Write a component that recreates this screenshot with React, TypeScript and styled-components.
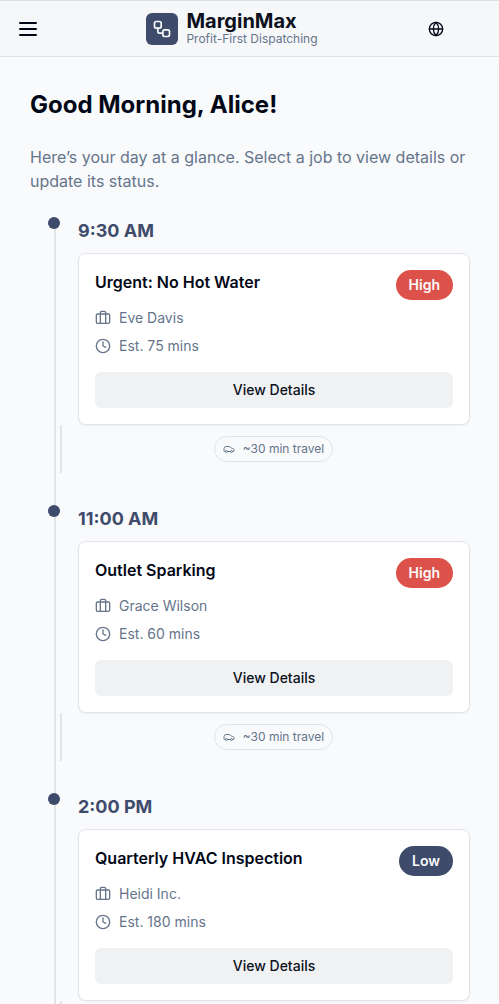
import React from "react";
import styled, { createGlobalStyle } from "styled-components";
import { Briefcase, Car, Clock, Globe, Workflow } from "lucide-react";

const navy = "#3f4b6b";
const ink = "#020817";
const muted = "#65758b";
const line = "#e2e4ea";
const canvas = "#f9fafc";

const GlobalStyle = createGlobalStyle`
  *, *::before, *::after { box-sizing: border-box; }
  html, body { margin: 0; height: 100%; overflow: hidden; }
  body {
    background: ${canvas};
    color: ${ink};
    font-family: Inter, "Liberation Sans", sans-serif;
    font-size: 16px;
    line-height: 24px;
  }
  #root { height: 100%; }
  h1, h2, h3, p { margin: 0; }
  button { font: inherit; color: inherit; border: 0; padding: 0; background: none; }
`;

const Page = styled.div`
  height: 100%;
  overflow: hidden;
`;

const Header = styled.header`
  display: flex;
  align-items: center;
  justify-content: space-between;
  height: 57px;
  padding: 0 51px 0 16px;
  background: #f6f7f9;
  border-top: 1px solid #dddfe3;
  border-bottom: 1px solid #dfe1e5;
`;

const IconButton = styled.button`
  display: grid;
  place-items: center;
  width: 24px;
  height: 24px;
`;

const Brand = styled.div`
  display: flex;
  align-items: center;
  gap: 8px;
`;

const Logo = styled.div`
  display: grid;
  place-items: center;
  width: 32px;
  height: 32px;
  border-radius: 6px;
  background: ${navy};
  color: #f9fafc;
`;

const BrandName = styled.div`
  font-size: 20px;
  font-weight: 700;
  line-height: 20px;
  color: #0c111d;
`;

const Tagline = styled.div`
  font-size: 12px;
  line-height: 16px;
  color: ${muted};
`;

const Main = styled.main`
  padding: 32px 29px 0 30px;
`;

const Greeting = styled.h1`
  font-size: 24px;
  font-weight: 700;
  line-height: 32px;
`;

const Intro = styled.p`
  margin-top: 24px;
  color: ${muted};
`;

const Timeline = styled.div`
  margin: 24px 0 0 24px;
  padding-left: 22px;
  border-left: 2px solid ${line};
`;

const Stop = styled.section`
  position: relative;
  margin-bottom: 32px;
`;

const Dot = styled.span`
  position: absolute;
  top: 0;
  left: -30px;
  width: 12px;
  height: 12px;
  border-radius: 50%;
  background: ${navy};
`;

const Time = styled.h2`
  margin-bottom: 8px;
  font-size: 18px;
  font-weight: 700;
  line-height: 28px;
  color: ${navy};
`;

const Card = styled.article`
  padding: 16px;
  border: 1px solid ${line};
  border-radius: 8px;
  background: #fff;
  box-shadow: 0 1px 2px rgba(0, 0, 0, 0.05);
`;

const CardTop = styled.div`
  display: flex;
  align-items: flex-start;
  justify-content: space-between;
`;

const JobTitle = styled.h3`
  font-size: 16px;
  font-weight: 600;
  line-height: 24px;
`;

const Badge = styled.span<{ $level: "High" | "Low" }>`
  padding: 5px 13px;
  border-radius: 15px;
  background: ${(p) => (p.$level === "High" ? "#dc524a" : navy)};
  color: #f9fafc;
  font-size: 14px;
  font-weight: 600;
  line-height: 20px;
`;

const Detail = styled.div`
  display: flex;
  align-items: center;
  gap: 8px;
  margin-top: 8px;
  color: ${muted};
  font-size: 14px;
  line-height: 20px;
`;

const DetailsButton = styled.button`
  display: block;
  width: 100%;
  height: 36px;
  margin-top: 16px;
  border-radius: 6px;
  background: #f0f1f3;
  && {
    color: #0c111d;
    font-size: 14px;
    font-weight: 500;
    line-height: 20px;
  }
`;

const Travel = styled.div`
  display: flex;
  align-items: center;
  justify-content: center;
  height: 48px;
  margin-left: -18px;
  padding-left: 15px;
  border-left: 2px solid ${line};
`;

const TravelPill = styled.div`
  display: flex;
  align-items: center;
  gap: 8px;
  height: 26px;
  padding: 0 8px;
  border: 1px solid ${line};
  border-radius: 13px;
  background: ${canvas};
  color: ${muted};
  font-size: 12px;
  line-height: 16px;
`;

interface Job {
  time: string;
  title: string;
  client: string;
  minutes: number;
  level: "High" | "Low";
  travel?: number;
}

const jobs: Job[] = [
  { time: "9:30 AM", title: "Urgent: No Hot Water", client: "Eve Davis", minutes: 75, level: "High", travel: 30 },
  { time: "11:00 AM", title: "Outlet Sparking", client: "Grace Wilson", minutes: 60, level: "High", travel: 30 },
  { time: "2:00 PM", title: "Quarterly HVAC Inspection", client: "Heidi Inc.", minutes: 180, level: "Low" },
];

function JobStop({ job }: { job: Job }) {
  return (
    <Stop>
      <Dot />
      <Time>{job.time}</Time>
      <Card>
        <CardTop>
          <JobTitle>{job.title}</JobTitle>
          <Badge $level={job.level}>{job.level}</Badge>
        </CardTop>
        <Detail>
          <Briefcase size={16} />
          {job.client}
        </Detail>
        <Detail>
          <Clock size={16} />
          {`Est. ${job.minutes} mins`}
        </Detail>
        <DetailsButton>View Details</DetailsButton>
      </Card>
      <Travel>
        {job.travel && (
          <TravelPill>
            <Car size={12} />
            {`~${job.travel} min travel`}
          </TravelPill>
        )}
      </Travel>
    </Stop>
  );
}

export default function App() {
  return (
    <Page>
      <GlobalStyle />
      <Header>
        <IconButton aria-label="Menu">
          <svg width="24" height="24" viewBox="0 0 24 24" fill="none" stroke="currentColor" strokeWidth="2" strokeLinecap="round">
            <path d="M4 6h16M4 12h16M4 18h16" />
          </svg>
        </IconButton>
        <Brand>
          <Logo>
            <Workflow size={20} />
          </Logo>
          <div>
            <BrandName>MarginMax</BrandName>
            <Tagline>Profit-First Dispatching</Tagline>
          </div>
        </Brand>
        <IconButton aria-label="Language">
          <Globe size={16} />
        </IconButton>
      </Header>
      <Main>
        <Greeting>Good Morning, Alice!</Greeting>
        <Intro>Here’s your day at a glance. Select a job to view details or update its status.</Intro>
        <Timeline>
          {jobs.map((job) => (
            <JobStop key={job.time} job={job} />
          ))}
        </Timeline>
      </Main>
    </Page>
  );
}
